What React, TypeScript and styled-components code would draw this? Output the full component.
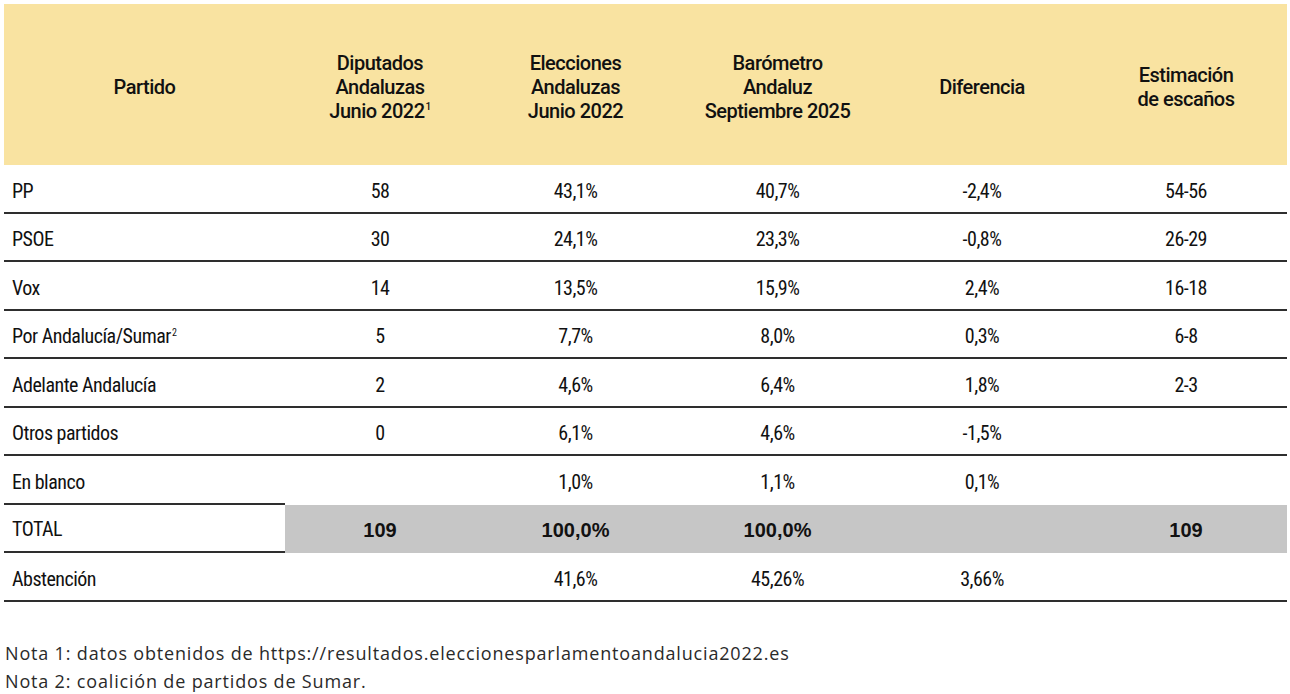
import React from 'react';
import styled, { createGlobalStyle } from 'styled-components';

const GlobalStyle = createGlobalStyle`
  html, body {
    margin: 0;
    padding: 0;
    background: #ffffff;
  }
`;

const Page = styled.div`
  padding: 4px 3px 0 4px;
  color: #111111;
`;

const Table = styled.div`
  display: flex;
  flex-direction: column;
  width: 1283px;
`;

const Row = styled.div<{ $head?: boolean }>`
  display: grid;
  grid-template-columns: 281px 190px 201px 203px 206px 202px;
  height: ${(p) => (p.$head ? '161px' : '48.5px')};
  background: ${(p) => (p.$head ? '#f9e3a1' : 'transparent')};
`;

const HeadCell = styled.div`
  display: flex;
  align-items: center;
  justify-content: center;
  padding-top: 4px;
`;

const HeadText = styled.div`
  text-align: center;
  font-family: Roboto, "Liberation Sans", sans-serif;
  font-weight: 500;
  font-size: 20px;
  line-height: 24px;
  letter-spacing: -0.5px;
`;

const Cell = styled.div<{ $first?: boolean; $line?: boolean; $shade?: boolean; $bold?: boolean }>`
  box-sizing: border-box;
  display: flex;
  align-items: center;
  justify-content: ${(p) => (p.$first ? 'flex-start' : 'center')};
  padding: 3px 0 0 ${(p) => (p.$first ? '8px' : '0')};
  border-bottom: ${(p) => (p.$line ? '2px solid #2e2e2e' : '2px solid transparent')};
  border-top: 2px solid transparent;
  background: ${(p) => (p.$shade ? '#c6c6c6' : 'transparent')};
  font-family: ${(p) =>
    p.$bold
      ? '"Liberation Sans", Arial, sans-serif'
      : '"Liberation Sans Narrow", "Roboto Condensed", "DejaVu Sans Condensed", sans-serif'};
  font-stretch: condensed;
  font-weight: ${(p) => (p.$bold ? 700 : 400)};
  font-size: 20px;
  letter-spacing: ${(p) => (p.$bold ? '0' : '-0.5px')};
`;

const TotalLabel = styled(Cell)`
  border-top: 2px solid #2e2e2e;
  margin-top: -2px;
  height: calc(100% + 2px);
`;

const Sup = styled.sup`
  font-size: 10px;
  line-height: 0;
  vertical-align: super;
  margin-left: 1px;
`;

const Notes = styled.div`
  margin-top: 37px;
  font-family: "Open Sans", "Liberation Sans", sans-serif;
  font-weight: 400;
  font-size: 18px;
  line-height: 28px;
  letter-spacing: 0.83px;
  color: #2a2a2a;
  padding-left: 1px;
`;

type RowData = { name: React.ReactNode; cells: string[] };

const rows: RowData[] = [
  { name: 'PP', cells: ['58', '43,1%', '40,7%', '-2,4%', '54-56'] },
  { name: 'PSOE', cells: ['30', '24,1%', '23,3%', '-0,8%', '26-29'] },
  { name: 'Vox', cells: ['14', '13,5%', '15,9%', '2,4%', '16-18'] },
  {
    name: (
      <span>
        Por Andalucía/Sumar<Sup>2</Sup>
      </span>
    ),
    cells: ['5', '7,7%', '8,0%', '0,3%', '6-8'],
  },
  { name: 'Adelante Andalucía', cells: ['2', '4,6%', '6,4%', '1,8%', '2-3'] },
  { name: 'Otros partidos', cells: ['0', '6,1%', '4,6%', '-1,5%', ''] },
];

const App: React.FC = () => {
  return (
    <Page>
      <GlobalStyle />
      <Table>
        <Row $head>
          <HeadCell>
            <HeadText>Partido</HeadText>
          </HeadCell>
          <HeadCell>
            <HeadText>
              Diputados
              <br />
              Andaluzas
              <br />
              Junio 2022<Sup>1</Sup>
            </HeadText>
          </HeadCell>
          <HeadCell>
            <HeadText>
              Elecciones
              <br />
              Andaluzas
              <br />
              Junio 2022
            </HeadText>
          </HeadCell>
          <HeadCell>
            <HeadText>
              Barómetro
              <br />
              Andaluz
              <br />
              Septiembre 2025
            </HeadText>
          </HeadCell>
          <HeadCell>
            <HeadText>Diferencia</HeadText>
          </HeadCell>
          <HeadCell>
            <HeadText>
              Estimación
              <br />
              de escaños
            </HeadText>
          </HeadCell>
        </Row>
        {rows.map((r, i) => (
          <Row key={i}>
            <Cell $first $line>
              {r.name}
            </Cell>
            {r.cells.map((c, j) => (
              <Cell key={j} $line>
                {c}
              </Cell>
            ))}
          </Row>
        ))}
        <Row>
          <Cell $first>En blanco</Cell>
          <Cell />
          <Cell>1,0%</Cell>
          <Cell>1,1%</Cell>
          <Cell>0,1%</Cell>
          <Cell />
        </Row>
        <Row>
          <TotalLabel $first $line>
            TOTAL
          </TotalLabel>
          <Cell $shade $bold>109</Cell>
          <Cell $shade $bold>100,0%</Cell>
          <Cell $shade $bold>100,0%</Cell>
          <Cell $shade $bold />
          <Cell $shade $bold>109</Cell>
        </Row>
        <Row>
          <Cell $first $line>
            Abstención
          </Cell>
          <Cell $line />
          <Cell $line>41,6%</Cell>
          <Cell $line>45,26%</Cell>
          <Cell $line>3,66%</Cell>
          <Cell $line />
        </Row>
      </Table>
      <Notes>
        Nota 1: datos obtenidos de https://resultados.eleccionesparlamentoandalucia2022.es
        <br />
        Nota 2: coalición de partidos de Sumar.
      </Notes>
    </Page>
  );
};

export default App;
